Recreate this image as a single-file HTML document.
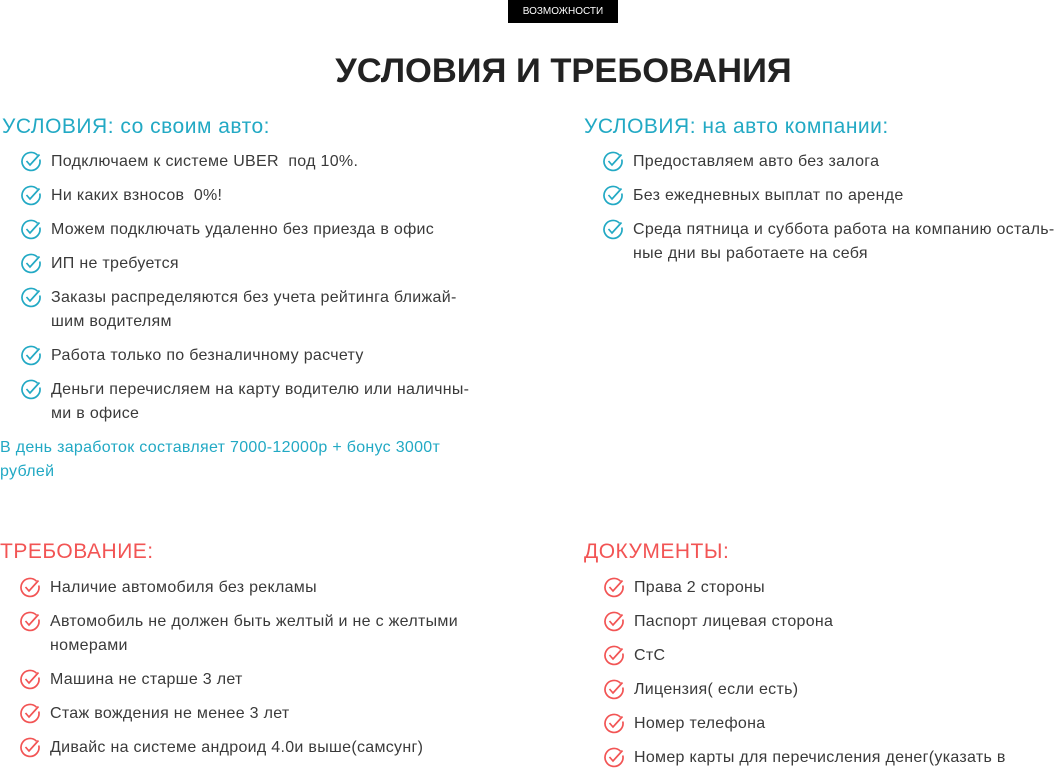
<!DOCTYPE html>
<html><head><meta charset="utf-8"><style>
body{margin:0;width:1061px;height:767px;overflow:hidden;background:#fff;font-family:"Liberation Sans",sans-serif;position:relative}
.badge{position:absolute;left:508px;top:0;width:110px;height:23px;background:#000;color:#fff;font-size:10px;line-height:24px;text-align:center}
h1{position:absolute;left:0;width:1127px;top:49px;margin:0;text-align:center;font-size:34.5px;font-weight:bold;color:#222;line-height:44px}
.h{position:absolute;font-size:21px;letter-spacing:0.5px;line-height:24px;white-space:nowrap}
.b{color:#22a9c4}.r{color:#f25454}
.i{position:absolute;font-size:16px;letter-spacing:0.3px;line-height:24px;color:#3a3a3a;white-space:nowrap}
.i svg{position:absolute;left:-31px;top:0px}
.p{position:absolute;font-size:16px;letter-spacing:0.3px;line-height:24px;color:#22a9c4}
</style></head><body>
<svg width="0" height="0" style="position:absolute"><defs>
<symbol id="c" viewBox="0 0 22 22"><path d="M17.5,5.2 A9,9 0 1 0 19.8,9.5" fill="none" stroke="currentColor" stroke-width="1.7"/><path d="M6.5,11 L10,15 L19.5,4.5" fill="none" stroke="currentColor" stroke-width="1.7"/></symbol></defs></svg>
<div class="badge">ВОЗМОЖНОСТИ</div>
<h1>УСЛОВИЯ И ТРЕБОВАНИЯ</h1>
<div class="h b" style="left:2px;top:115px">УСЛОВИЯ: со своим авто:</div>
<div class="h b" style="left:584px;top:115px">УСЛОВИЯ: на авто компании:</div>
<div class="h r" style="left:0;top:540px">ТРЕБОВАНИЕ:</div>
<div class="h r" style="left:584px;top:540px">ДОКУМЕНТЫ:</div>

<div class="i" style="left:51px;top:150px"><svg width="22" height="22" style="color:#22a9c4"><use href="#c"/></svg>Подключаем к системе UBER&nbsp; под 10%.</div>
<div class="i" style="left:51px;top:184px"><svg width="22" height="22" style="color:#22a9c4"><use href="#c"/></svg>Ни каких взносов&nbsp; 0%!</div>
<div class="i" style="left:51px;top:218px"><svg width="22" height="22" style="color:#22a9c4"><use href="#c"/></svg>Можем подключать удаленно без приезда в офис</div>
<div class="i" style="left:51px;top:252px"><svg width="22" height="22" style="color:#22a9c4"><use href="#c"/></svg>ИП не требуется</div>
<div class="i" style="left:51px;top:286px"><svg width="22" height="22" style="color:#22a9c4"><use href="#c"/></svg>Заказы распределяются без учета рейтинга ближай-<br>шим водителям</div>
<div class="i" style="left:51px;top:344px"><svg width="22" height="22" style="color:#22a9c4"><use href="#c"/></svg>Работа только по безналичному расчету</div>
<div class="i" style="left:51px;top:378px"><svg width="22" height="22" style="color:#22a9c4"><use href="#c"/></svg>Деньги перечисляем на карту водителю или наличны-<br>ми в офисе</div>
<div class="p" style="left:0;top:436px">В день заработок составляет 7000-12000р + бонус 3000т<br>рублей</div>

<div class="i" style="left:633px;top:150px"><svg width="22" height="22" style="color:#22a9c4"><use href="#c"/></svg>Предоставляем авто без залога</div>
<div class="i" style="left:633px;top:184px"><svg width="22" height="22" style="color:#22a9c4"><use href="#c"/></svg>Без ежедневных выплат по аренде</div>
<div class="i" style="left:633px;top:218px"><svg width="22" height="22" style="color:#22a9c4"><use href="#c"/></svg>Среда пятница и суббота работа на компанию осталь-<br>ные дни вы работаете на себя</div>

<div class="i" style="left:50px;top:576px"><svg width="22" height="22" style="color:#f25454"><use href="#c"/></svg>Наличие автомобиля без рекламы</div>
<div class="i" style="left:50px;top:610px"><svg width="22" height="22" style="color:#f25454"><use href="#c"/></svg>Автомобиль не должен быть желтый и не с желтыми<br>номерами</div>
<div class="i" style="left:50px;top:668px"><svg width="22" height="22" style="color:#f25454"><use href="#c"/></svg>Машина не старше 3 лет</div>
<div class="i" style="left:50px;top:702px"><svg width="22" height="22" style="color:#f25454"><use href="#c"/></svg>Стаж вождения не менее 3 лет</div>
<div class="i" style="left:50px;top:736px"><svg width="22" height="22" style="color:#f25454"><use href="#c"/></svg>Дивайс на системе андроид 4.0и выше(самсунг)</div>

<div class="i" style="left:634px;top:576px"><svg width="22" height="22" style="color:#f25454"><use href="#c"/></svg>Права 2 стороны</div>
<div class="i" style="left:634px;top:610px"><svg width="22" height="22" style="color:#f25454"><use href="#c"/></svg>Паспорт лицевая сторона</div>
<div class="i" style="left:634px;top:644px"><svg width="22" height="22" style="color:#f25454"><use href="#c"/></svg>СтС</div>
<div class="i" style="left:634px;top:678px"><svg width="22" height="22" style="color:#f25454"><use href="#c"/></svg>Лицензия( если есть)</div>
<div class="i" style="left:634px;top:712px"><svg width="22" height="22" style="color:#f25454"><use href="#c"/></svg>Номер телефона</div>
<div class="i" style="left:634px;top:746px"><svg width="22" height="22" style="color:#f25454"><use href="#c"/></svg>Номер карты для перечисления денег(указать в</div>
</body></html>
